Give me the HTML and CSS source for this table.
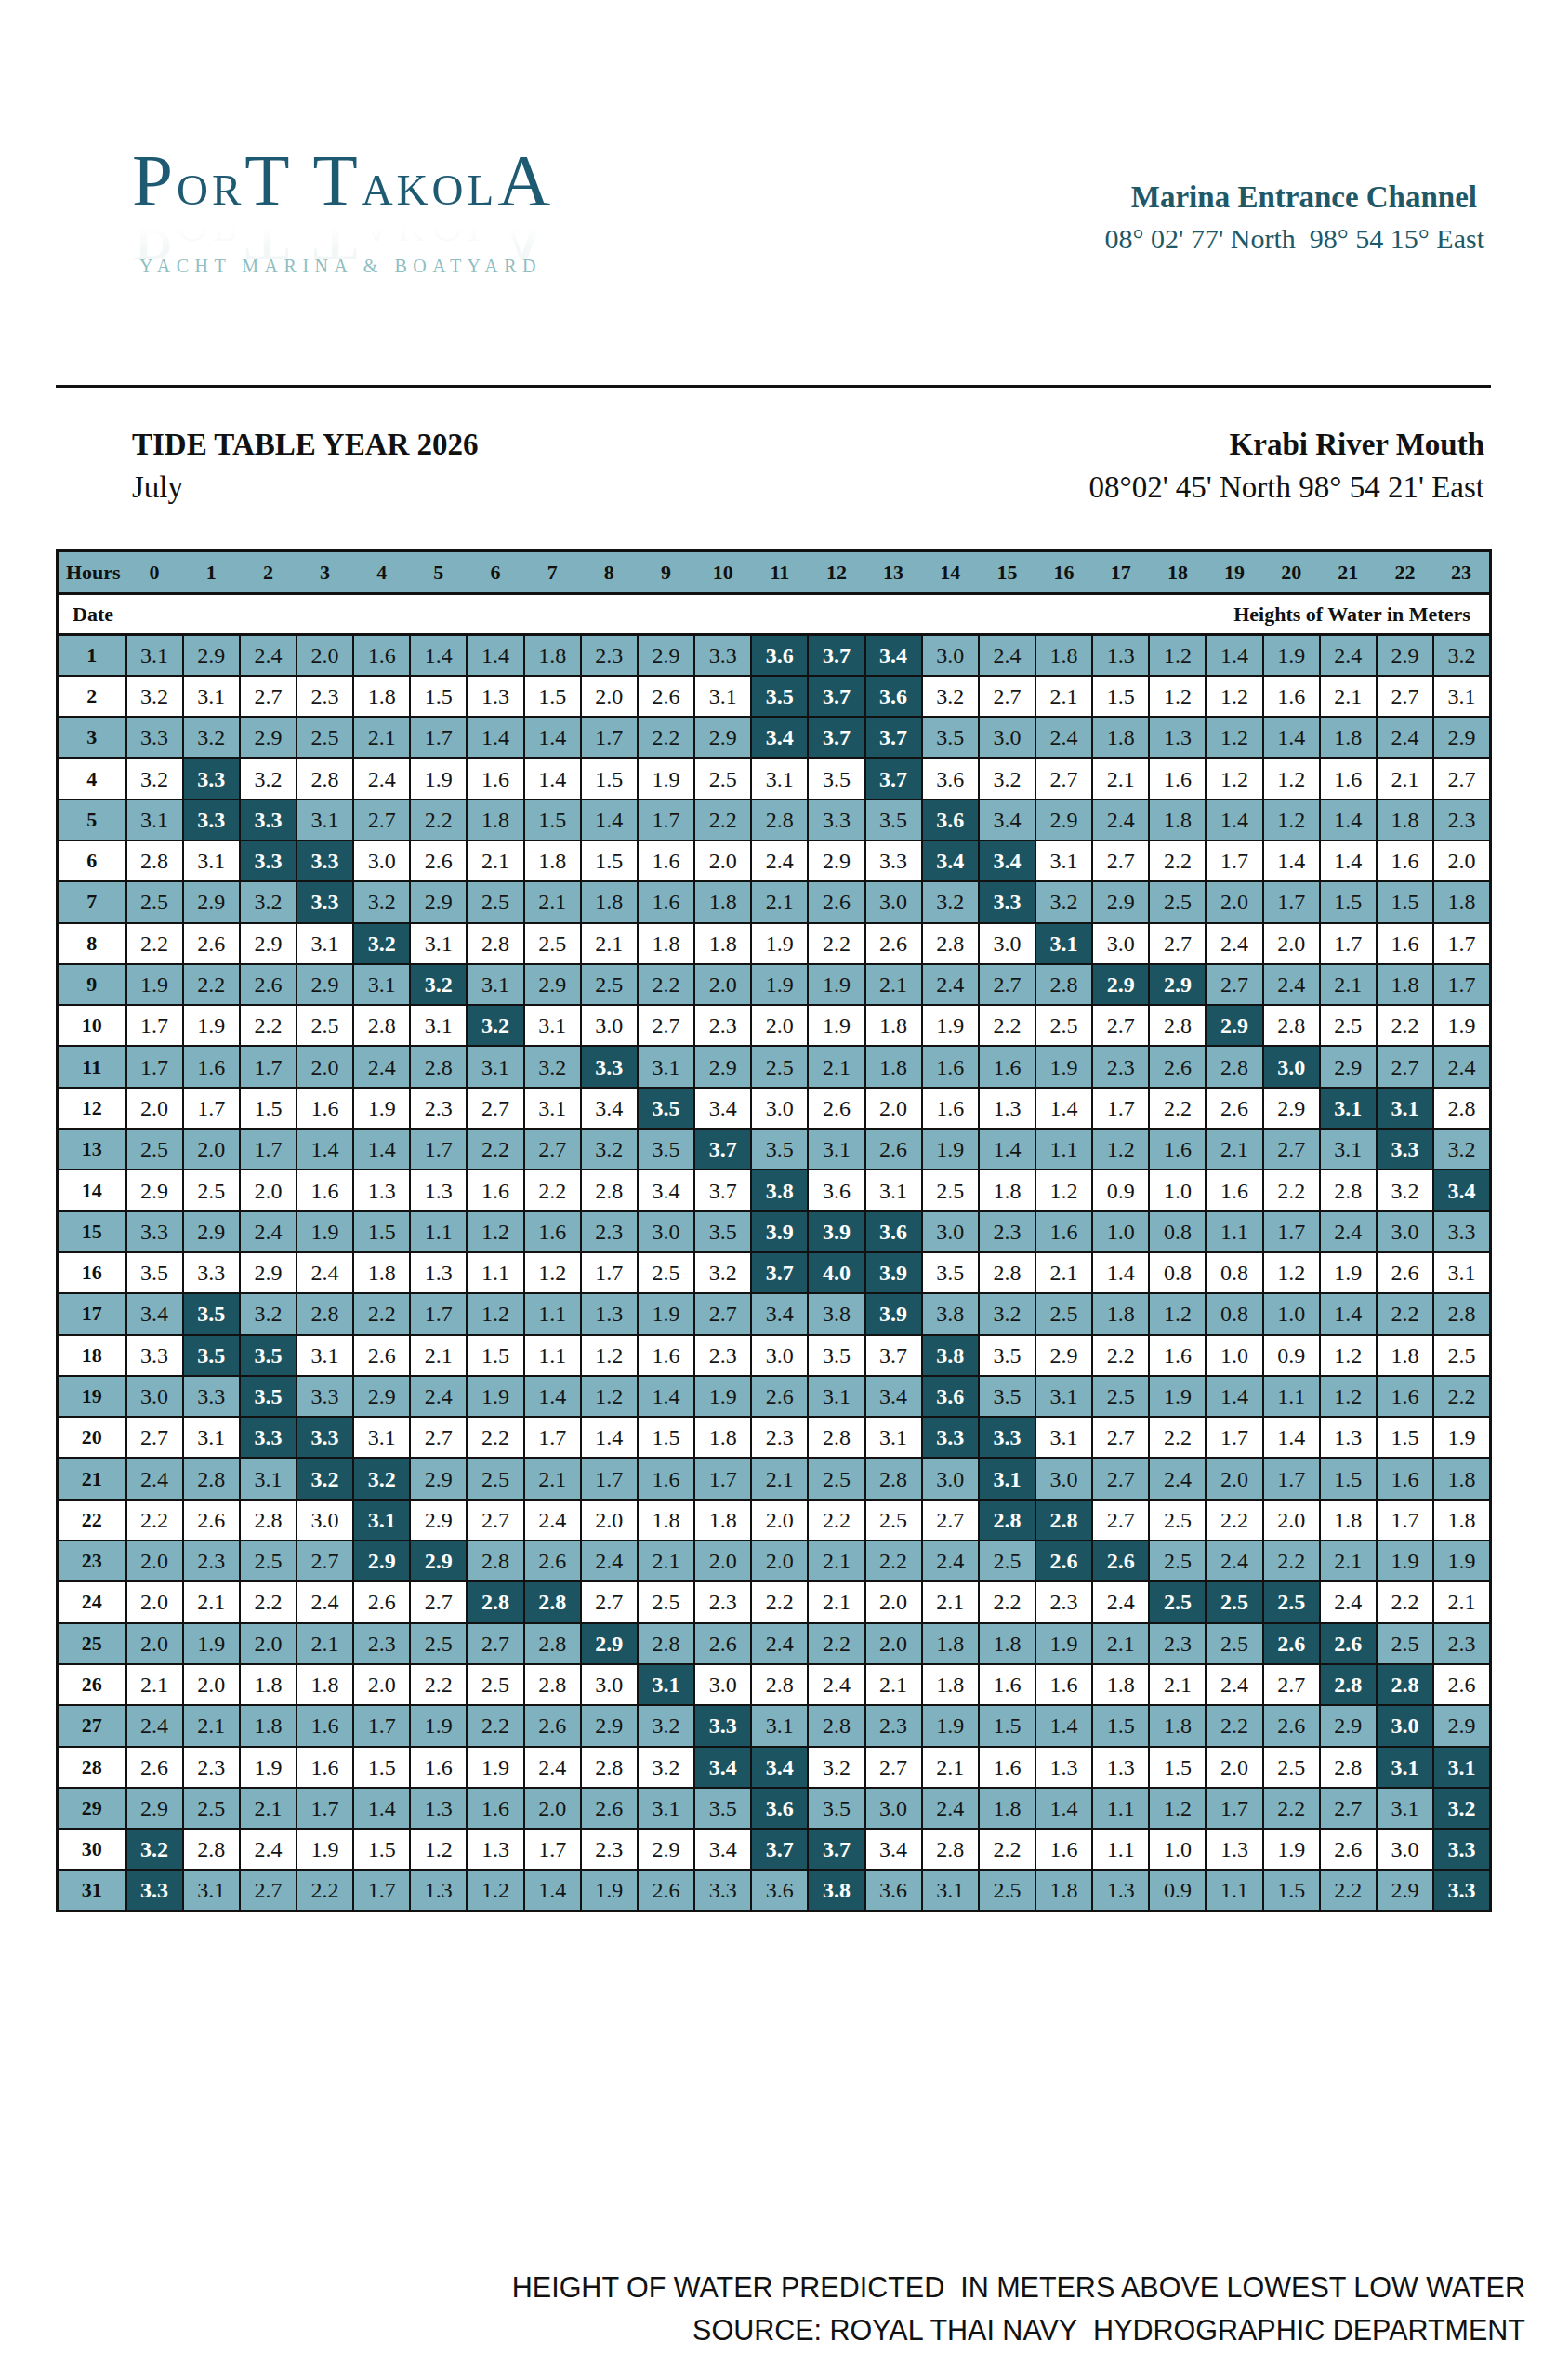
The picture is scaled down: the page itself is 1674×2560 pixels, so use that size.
FILE: index.html
```html
<!DOCTYPE html>
<html lang="en">
<head>
<meta charset="utf-8">
<title>Port Takola – Tide Table July 2026</title>
<link rel="stylesheet" href="styles.css">
</head>
<body>
<div class="page">
  <header class="brand">
    <div class="logo">
      <div class="logo-name">P<span class="sc">OR</span>T T<span class="sc">AKOL</span>A</div>
      <div class="logo-tag">YACHT MARINA &amp; BOATYARD</div>
    </div>
    <div class="station">
      <div class="station-name">Marina Entrance Channel</div>
      <div class="station-coords">08° 02' 77' North&nbsp; 98° 54 15° East</div>
    </div>
  </header>

  <div class="rule"></div>

  <section class="titles">
    <div class="titles-left">
      <h1 class="title">TIDE TABLE YEAR 2026</h1>
      <p class="subtitle">July</p>
    </div>
    <div class="titles-right">
      <h2 class="title">Krabi River Mouth</h2>
      <p class="subtitle">08°02' 45' North 98° 54 21' East</p>
    </div>
  </section>

  <table class="tide">
    <colgroup>
      <col class="c-date">
      <col><col><col><col><col><col><col><col><col><col><col><col>
      <col><col><col><col><col><col><col><col><col><col><col><col>
    </colgroup>
    <thead>
      <tr class="hours-row">
        <th class="hours-label">Hours</th>
        <th>0</th><th>1</th><th>2</th><th>3</th><th>4</th><th>5</th><th>6</th><th>7</th><th>8</th><th>9</th><th>10</th><th>11</th>
        <th>12</th><th>13</th><th>14</th><th>15</th><th>16</th><th>17</th><th>18</th><th>19</th><th>20</th><th>21</th><th>22</th><th>23</th>
      </tr>
      <tr class="date-row">
        <td colspan="25"><div class="date-inner"><span>Date</span><span>Heights of Water in Meters</span></div></td>
      </tr>
    </thead>
    <tbody>
      <tr class="odd"><th>1</th><td>3.1</td><td>2.9</td><td>2.4</td><td>2.0</td><td>1.6</td><td>1.4</td><td>1.4</td><td>1.8</td><td>2.3</td><td>2.9</td><td>3.3</td><td class="h">3.6</td><td class="h">3.7</td><td class="h">3.4</td><td>3.0</td><td>2.4</td><td>1.8</td><td>1.3</td><td>1.2</td><td>1.4</td><td>1.9</td><td>2.4</td><td>2.9</td><td>3.2</td></tr>
      <tr><th>2</th><td>3.2</td><td>3.1</td><td>2.7</td><td>2.3</td><td>1.8</td><td>1.5</td><td>1.3</td><td>1.5</td><td>2.0</td><td>2.6</td><td>3.1</td><td class="h">3.5</td><td class="h">3.7</td><td class="h">3.6</td><td>3.2</td><td>2.7</td><td>2.1</td><td>1.5</td><td>1.2</td><td>1.2</td><td>1.6</td><td>2.1</td><td>2.7</td><td>3.1</td></tr>
      <tr class="odd"><th>3</th><td>3.3</td><td>3.2</td><td>2.9</td><td>2.5</td><td>2.1</td><td>1.7</td><td>1.4</td><td>1.4</td><td>1.7</td><td>2.2</td><td>2.9</td><td class="h">3.4</td><td class="h">3.7</td><td class="h">3.7</td><td>3.5</td><td>3.0</td><td>2.4</td><td>1.8</td><td>1.3</td><td>1.2</td><td>1.4</td><td>1.8</td><td>2.4</td><td>2.9</td></tr>
      <tr><th>4</th><td>3.2</td><td class="h">3.3</td><td>3.2</td><td>2.8</td><td>2.4</td><td>1.9</td><td>1.6</td><td>1.4</td><td>1.5</td><td>1.9</td><td>2.5</td><td>3.1</td><td>3.5</td><td class="h">3.7</td><td>3.6</td><td>3.2</td><td>2.7</td><td>2.1</td><td>1.6</td><td>1.2</td><td>1.2</td><td>1.6</td><td>2.1</td><td>2.7</td></tr>
      <tr class="odd"><th>5</th><td>3.1</td><td class="h">3.3</td><td class="h">3.3</td><td>3.1</td><td>2.7</td><td>2.2</td><td>1.8</td><td>1.5</td><td>1.4</td><td>1.7</td><td>2.2</td><td>2.8</td><td>3.3</td><td>3.5</td><td class="h">3.6</td><td>3.4</td><td>2.9</td><td>2.4</td><td>1.8</td><td>1.4</td><td>1.2</td><td>1.4</td><td>1.8</td><td>2.3</td></tr>
      <tr><th>6</th><td>2.8</td><td>3.1</td><td class="h">3.3</td><td class="h">3.3</td><td>3.0</td><td>2.6</td><td>2.1</td><td>1.8</td><td>1.5</td><td>1.6</td><td>2.0</td><td>2.4</td><td>2.9</td><td>3.3</td><td class="h">3.4</td><td class="h">3.4</td><td>3.1</td><td>2.7</td><td>2.2</td><td>1.7</td><td>1.4</td><td>1.4</td><td>1.6</td><td>2.0</td></tr>
      <tr class="odd"><th>7</th><td>2.5</td><td>2.9</td><td>3.2</td><td class="h">3.3</td><td>3.2</td><td>2.9</td><td>2.5</td><td>2.1</td><td>1.8</td><td>1.6</td><td>1.8</td><td>2.1</td><td>2.6</td><td>3.0</td><td>3.2</td><td class="h">3.3</td><td>3.2</td><td>2.9</td><td>2.5</td><td>2.0</td><td>1.7</td><td>1.5</td><td>1.5</td><td>1.8</td></tr>
      <tr><th>8</th><td>2.2</td><td>2.6</td><td>2.9</td><td>3.1</td><td class="h">3.2</td><td>3.1</td><td>2.8</td><td>2.5</td><td>2.1</td><td>1.8</td><td>1.8</td><td>1.9</td><td>2.2</td><td>2.6</td><td>2.8</td><td>3.0</td><td class="h">3.1</td><td>3.0</td><td>2.7</td><td>2.4</td><td>2.0</td><td>1.7</td><td>1.6</td><td>1.7</td></tr>
      <tr class="odd"><th>9</th><td>1.9</td><td>2.2</td><td>2.6</td><td>2.9</td><td>3.1</td><td class="h">3.2</td><td>3.1</td><td>2.9</td><td>2.5</td><td>2.2</td><td>2.0</td><td>1.9</td><td>1.9</td><td>2.1</td><td>2.4</td><td>2.7</td><td>2.8</td><td class="h">2.9</td><td class="h">2.9</td><td>2.7</td><td>2.4</td><td>2.1</td><td>1.8</td><td>1.7</td></tr>
      <tr><th>10</th><td>1.7</td><td>1.9</td><td>2.2</td><td>2.5</td><td>2.8</td><td>3.1</td><td class="h">3.2</td><td>3.1</td><td>3.0</td><td>2.7</td><td>2.3</td><td>2.0</td><td>1.9</td><td>1.8</td><td>1.9</td><td>2.2</td><td>2.5</td><td>2.7</td><td>2.8</td><td class="h">2.9</td><td>2.8</td><td>2.5</td><td>2.2</td><td>1.9</td></tr>
      <tr class="odd"><th>11</th><td>1.7</td><td>1.6</td><td>1.7</td><td>2.0</td><td>2.4</td><td>2.8</td><td>3.1</td><td>3.2</td><td class="h">3.3</td><td>3.1</td><td>2.9</td><td>2.5</td><td>2.1</td><td>1.8</td><td>1.6</td><td>1.6</td><td>1.9</td><td>2.3</td><td>2.6</td><td>2.8</td><td class="h">3.0</td><td>2.9</td><td>2.7</td><td>2.4</td></tr>
      <tr><th>12</th><td>2.0</td><td>1.7</td><td>1.5</td><td>1.6</td><td>1.9</td><td>2.3</td><td>2.7</td><td>3.1</td><td>3.4</td><td class="h">3.5</td><td>3.4</td><td>3.0</td><td>2.6</td><td>2.0</td><td>1.6</td><td>1.3</td><td>1.4</td><td>1.7</td><td>2.2</td><td>2.6</td><td>2.9</td><td class="h">3.1</td><td class="h">3.1</td><td>2.8</td></tr>
      <tr class="odd"><th>13</th><td>2.5</td><td>2.0</td><td>1.7</td><td>1.4</td><td>1.4</td><td>1.7</td><td>2.2</td><td>2.7</td><td>3.2</td><td>3.5</td><td class="h">3.7</td><td>3.5</td><td>3.1</td><td>2.6</td><td>1.9</td><td>1.4</td><td>1.1</td><td>1.2</td><td>1.6</td><td>2.1</td><td>2.7</td><td>3.1</td><td class="h">3.3</td><td>3.2</td></tr>
      <tr><th>14</th><td>2.9</td><td>2.5</td><td>2.0</td><td>1.6</td><td>1.3</td><td>1.3</td><td>1.6</td><td>2.2</td><td>2.8</td><td>3.4</td><td>3.7</td><td class="h">3.8</td><td>3.6</td><td>3.1</td><td>2.5</td><td>1.8</td><td>1.2</td><td>0.9</td><td>1.0</td><td>1.6</td><td>2.2</td><td>2.8</td><td>3.2</td><td class="h">3.4</td></tr>
      <tr class="odd"><th>15</th><td>3.3</td><td>2.9</td><td>2.4</td><td>1.9</td><td>1.5</td><td>1.1</td><td>1.2</td><td>1.6</td><td>2.3</td><td>3.0</td><td>3.5</td><td class="h">3.9</td><td class="h">3.9</td><td class="h">3.6</td><td>3.0</td><td>2.3</td><td>1.6</td><td>1.0</td><td>0.8</td><td>1.1</td><td>1.7</td><td>2.4</td><td>3.0</td><td>3.3</td></tr>
      <tr><th>16</th><td>3.5</td><td>3.3</td><td>2.9</td><td>2.4</td><td>1.8</td><td>1.3</td><td>1.1</td><td>1.2</td><td>1.7</td><td>2.5</td><td>3.2</td><td class="h">3.7</td><td class="h">4.0</td><td class="h">3.9</td><td>3.5</td><td>2.8</td><td>2.1</td><td>1.4</td><td>0.8</td><td>0.8</td><td>1.2</td><td>1.9</td><td>2.6</td><td>3.1</td></tr>
      <tr class="odd"><th>17</th><td>3.4</td><td class="h">3.5</td><td>3.2</td><td>2.8</td><td>2.2</td><td>1.7</td><td>1.2</td><td>1.1</td><td>1.3</td><td>1.9</td><td>2.7</td><td>3.4</td><td>3.8</td><td class="h">3.9</td><td>3.8</td><td>3.2</td><td>2.5</td><td>1.8</td><td>1.2</td><td>0.8</td><td>1.0</td><td>1.4</td><td>2.2</td><td>2.8</td></tr>
      <tr><th>18</th><td>3.3</td><td class="h">3.5</td><td class="h">3.5</td><td>3.1</td><td>2.6</td><td>2.1</td><td>1.5</td><td>1.1</td><td>1.2</td><td>1.6</td><td>2.3</td><td>3.0</td><td>3.5</td><td>3.7</td><td class="h">3.8</td><td>3.5</td><td>2.9</td><td>2.2</td><td>1.6</td><td>1.0</td><td>0.9</td><td>1.2</td><td>1.8</td><td>2.5</td></tr>
      <tr class="odd"><th>19</th><td>3.0</td><td>3.3</td><td class="h">3.5</td><td>3.3</td><td>2.9</td><td>2.4</td><td>1.9</td><td>1.4</td><td>1.2</td><td>1.4</td><td>1.9</td><td>2.6</td><td>3.1</td><td>3.4</td><td class="h">3.6</td><td>3.5</td><td>3.1</td><td>2.5</td><td>1.9</td><td>1.4</td><td>1.1</td><td>1.2</td><td>1.6</td><td>2.2</td></tr>
      <tr><th>20</th><td>2.7</td><td>3.1</td><td class="h">3.3</td><td class="h">3.3</td><td>3.1</td><td>2.7</td><td>2.2</td><td>1.7</td><td>1.4</td><td>1.5</td><td>1.8</td><td>2.3</td><td>2.8</td><td>3.1</td><td class="h">3.3</td><td class="h">3.3</td><td>3.1</td><td>2.7</td><td>2.2</td><td>1.7</td><td>1.4</td><td>1.3</td><td>1.5</td><td>1.9</td></tr>
      <tr class="odd"><th>21</th><td>2.4</td><td>2.8</td><td>3.1</td><td class="h">3.2</td><td class="h">3.2</td><td>2.9</td><td>2.5</td><td>2.1</td><td>1.7</td><td>1.6</td><td>1.7</td><td>2.1</td><td>2.5</td><td>2.8</td><td>3.0</td><td class="h">3.1</td><td>3.0</td><td>2.7</td><td>2.4</td><td>2.0</td><td>1.7</td><td>1.5</td><td>1.6</td><td>1.8</td></tr>
      <tr><th>22</th><td>2.2</td><td>2.6</td><td>2.8</td><td>3.0</td><td class="h">3.1</td><td>2.9</td><td>2.7</td><td>2.4</td><td>2.0</td><td>1.8</td><td>1.8</td><td>2.0</td><td>2.2</td><td>2.5</td><td>2.7</td><td class="h">2.8</td><td class="h">2.8</td><td>2.7</td><td>2.5</td><td>2.2</td><td>2.0</td><td>1.8</td><td>1.7</td><td>1.8</td></tr>
      <tr class="odd"><th>23</th><td>2.0</td><td>2.3</td><td>2.5</td><td>2.7</td><td class="h">2.9</td><td class="h">2.9</td><td>2.8</td><td>2.6</td><td>2.4</td><td>2.1</td><td>2.0</td><td>2.0</td><td>2.1</td><td>2.2</td><td>2.4</td><td>2.5</td><td class="h">2.6</td><td class="h">2.6</td><td>2.5</td><td>2.4</td><td>2.2</td><td>2.1</td><td>1.9</td><td>1.9</td></tr>
      <tr><th>24</th><td>2.0</td><td>2.1</td><td>2.2</td><td>2.4</td><td>2.6</td><td>2.7</td><td class="h">2.8</td><td class="h">2.8</td><td>2.7</td><td>2.5</td><td>2.3</td><td>2.2</td><td>2.1</td><td>2.0</td><td>2.1</td><td>2.2</td><td>2.3</td><td>2.4</td><td class="h">2.5</td><td class="h">2.5</td><td class="h">2.5</td><td>2.4</td><td>2.2</td><td>2.1</td></tr>
      <tr class="odd"><th>25</th><td>2.0</td><td>1.9</td><td>2.0</td><td>2.1</td><td>2.3</td><td>2.5</td><td>2.7</td><td>2.8</td><td class="h">2.9</td><td>2.8</td><td>2.6</td><td>2.4</td><td>2.2</td><td>2.0</td><td>1.8</td><td>1.8</td><td>1.9</td><td>2.1</td><td>2.3</td><td>2.5</td><td class="h">2.6</td><td class="h">2.6</td><td>2.5</td><td>2.3</td></tr>
      <tr><th>26</th><td>2.1</td><td>2.0</td><td>1.8</td><td>1.8</td><td>2.0</td><td>2.2</td><td>2.5</td><td>2.8</td><td>3.0</td><td class="h">3.1</td><td>3.0</td><td>2.8</td><td>2.4</td><td>2.1</td><td>1.8</td><td>1.6</td><td>1.6</td><td>1.8</td><td>2.1</td><td>2.4</td><td>2.7</td><td class="h">2.8</td><td class="h">2.8</td><td>2.6</td></tr>
      <tr class="odd"><th>27</th><td>2.4</td><td>2.1</td><td>1.8</td><td>1.6</td><td>1.7</td><td>1.9</td><td>2.2</td><td>2.6</td><td>2.9</td><td>3.2</td><td class="h">3.3</td><td>3.1</td><td>2.8</td><td>2.3</td><td>1.9</td><td>1.5</td><td>1.4</td><td>1.5</td><td>1.8</td><td>2.2</td><td>2.6</td><td>2.9</td><td class="h">3.0</td><td>2.9</td></tr>
      <tr><th>28</th><td>2.6</td><td>2.3</td><td>1.9</td><td>1.6</td><td>1.5</td><td>1.6</td><td>1.9</td><td>2.4</td><td>2.8</td><td>3.2</td><td class="h">3.4</td><td class="h">3.4</td><td>3.2</td><td>2.7</td><td>2.1</td><td>1.6</td><td>1.3</td><td>1.3</td><td>1.5</td><td>2.0</td><td>2.5</td><td>2.8</td><td class="h">3.1</td><td class="h">3.1</td></tr>
      <tr class="odd"><th>29</th><td>2.9</td><td>2.5</td><td>2.1</td><td>1.7</td><td>1.4</td><td>1.3</td><td>1.6</td><td>2.0</td><td>2.6</td><td>3.1</td><td>3.5</td><td class="h">3.6</td><td>3.5</td><td>3.0</td><td>2.4</td><td>1.8</td><td>1.4</td><td>1.1</td><td>1.2</td><td>1.7</td><td>2.2</td><td>2.7</td><td>3.1</td><td class="h">3.2</td></tr>
      <tr><th>30</th><td class="h">3.2</td><td>2.8</td><td>2.4</td><td>1.9</td><td>1.5</td><td>1.2</td><td>1.3</td><td>1.7</td><td>2.3</td><td>2.9</td><td>3.4</td><td class="h">3.7</td><td class="h">3.7</td><td>3.4</td><td>2.8</td><td>2.2</td><td>1.6</td><td>1.1</td><td>1.0</td><td>1.3</td><td>1.9</td><td>2.6</td><td>3.0</td><td class="h">3.3</td></tr>
      <tr class="odd"><th>31</th><td class="h">3.3</td><td>3.1</td><td>2.7</td><td>2.2</td><td>1.7</td><td>1.3</td><td>1.2</td><td>1.4</td><td>1.9</td><td>2.6</td><td>3.3</td><td>3.6</td><td class="h">3.8</td><td>3.6</td><td>3.1</td><td>2.5</td><td>1.8</td><td>1.3</td><td>0.9</td><td>1.1</td><td>1.5</td><td>2.2</td><td>2.9</td><td class="h">3.3</td></tr>
    </tbody>
  </table>

  <footer class="note">
    <div>HEIGHT OF WATER PREDICTED&nbsp; IN METERS ABOVE LOWEST LOW WATER</div>
    <div>SOURCE: ROYAL THAI NAVY&nbsp; HYDROGRAPHIC DEPARTMENT</div>
  </footer>
</div>
</body>
</html>
```

FILE: styles.css
```css
* { box-sizing: border-box; }

html, body {
  margin: 0;
  padding: 0;
  background: #ffffff;
}

body {
  font-family: "Liberation Serif", "Times New Roman", serif;
  color: #111111;
}

.page {
  width: 1674px;
  min-height: 2560px;
  display: flex;
  flex-direction: column;
}

/* ---------- brand header ---------- */
.brand {
  display: flex;
  justify-content: space-between;
  align-items: flex-start;
  padding: 154px 77px 0 142px;
}

.logo {
  color: #1e5a72;
}

.logo-name {
  height: 80px;
  font-size: 79px;
  line-height: 80px;
  letter-spacing: 4px;
  white-space: nowrap;
  -webkit-box-reflect: below -20px linear-gradient(to bottom, rgba(0, 0, 0, 0.07) 0%, rgba(0, 0, 0, 0.04) 40%, transparent 62%);
}

.logo-name .sc {
  font-size: 47px;
  line-height: 1;
}

.logo-tag {
  margin: 40px 0 0 8px;
  font-size: 20px;
  line-height: 24px;
  letter-spacing: 6.5px;
  color: #8fbec2;
  white-space: nowrap;
}

.station {
  text-align: right;
  color: #1f5866;
  padding-top: 38px;
}

.station-name {
  font-weight: bold;
  font-size: 33px;
  line-height: 40px;
  margin-right: 8px;
}

.station-coords {
  font-size: 30px;
  line-height: 50px;
}

/* ---------- divider ---------- */
.rule {
  width: 1544px;
  height: 3px;
  margin: 116px 0 0 60px;
  background: #111111;
}

/* ---------- titles ---------- */
.titles {
  display: flex;
  justify-content: space-between;
  padding: 0 77px 0 142px;
  margin-top: 41px;
}

.titles-right {
  text-align: right;
}

.title {
  margin: 0;
  font-size: 33px;
  line-height: 40px;
  font-weight: bold;
}

.subtitle {
  margin: 0;
  font-size: 33px;
  line-height: 52px;
}

/* ---------- tide table ---------- */
.tide {
  width: 1542px;
  margin: 41px 0 0 60px;
  border-collapse: collapse;
  table-layout: fixed;
  border: 3px solid #111111;
}

.tide col {
  width: 61.17px;
}

.tide col.c-date {
  width: 74px;
}

.tide th,
.tide td {
  padding: 0;
  border: 2px solid #111111;
  text-align: center;
  vertical-align: middle;
  line-height: 1;
}

.hours-row {
  height: 46px;
  background: #7fb1be;
}

.hours-row th {
  border-left: none;
  border-right: none;
  border-bottom: 3px solid #111111;
  font-size: 22px;
  font-weight: bold;
}

.hours-row th.hours-label {
  text-align: left;
  padding-left: 8px;
}

.date-row {
  height: 44px;
  background: #ffffff;
}

.date-row td {
  border-bottom: 3px solid #111111;
}

.date-inner {
  display: flex;
  justify-content: space-between;
  padding: 0 20px 0 15px;
  font-size: 22px;
  font-weight: bold;
}

.tide tbody tr {
  height: 44.3px;
  background: #ffffff;
}

.tide tbody tr.odd {
  background: #7fb1be;
}

.tide tbody th {
  font-size: 22px;
  font-weight: bold;
}

.tide tbody td {
  font-size: 24px;
  color: #151515;
}

.tide tbody td.h {
  background: #1c5561;
  color: #ffffff;
  font-weight: bold;
}

/* ---------- footnote ---------- */
.note {
  margin-top: auto;
  padding: 0 33px 31px 0;
  text-align: right;
  font-family: "Liberation Sans", Arial, sans-serif;
  font-size: 30.5px;
  line-height: 46px;
  color: #111111;
}
```
